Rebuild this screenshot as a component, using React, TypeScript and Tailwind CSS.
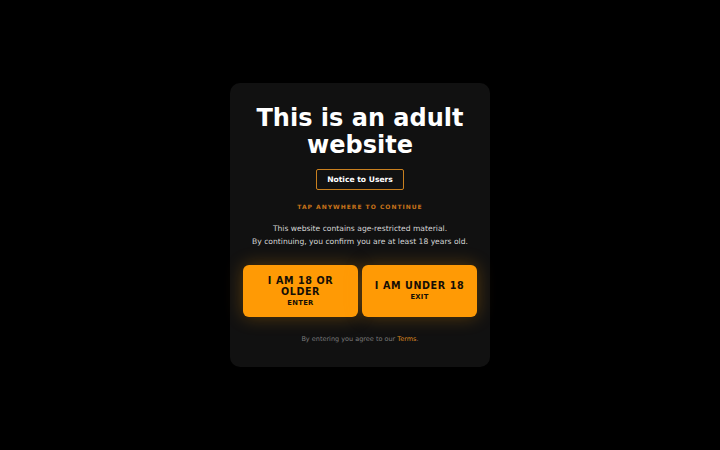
import React from "react";

export default function App() {
  return (
    <div
      className="w-[720px] h-[450px] bg-black flex items-center justify-center"
      style={{ fontFamily: '"DejaVu Sans", sans-serif' }}
    >
      <div className="w-[260px] h-[284px] bg-[#111111] rounded-[10px] flex flex-col items-center px-[13px] pt-[22px]">
        <h1 className="text-white font-bold text-[24px] leading-[27px] text-center">
          This is an adult
          <br />
          website
        </h1>
        <div className="mt-[10px] border-[1.5px] border-[#c9801f] rounded-[2px] px-[10px] h-[21px] flex items-center text-white font-bold text-[7.6px]">
          Notice to Users
        </div>
        <div className="mt-[12px] h-[9px] flex items-center text-[#c9741a] font-bold text-[6px] tracking-[1px]">
          TAP ANYWHERE TO CONTINUE
        </div>
        <p className="mt-[11px] text-[#d6d6d6] text-[7.6px] leading-[13px] text-center whitespace-nowrap">
          This website contains age-restricted material.
          <br />
          By continuing, you confirm you are at least 18 years old.
        </p>
        <div className="mt-[17px] w-full flex gap-[4px]">
          <div className="flex-1 h-[52px] bg-[#ff9a05] rounded-[6px] shadow-[0_0_18px_rgba(255,154,5,0.3)] flex flex-col items-center justify-center pt-[1px] text-[#140e05]">
            <div className="font-bold text-[9.6px] leading-[11px] tracking-[0.6px] text-center">
              I AM 18 OR
              <br />
              OLDER
            </div>
            <div className="font-bold text-[6.8px] mt-[1px] tracking-[0.3px]">ENTER</div>
          </div>
          <div className="flex-1 h-[52px] bg-[#ff9a05] rounded-[6px] shadow-[0_0_18px_rgba(255,154,5,0.3)] flex flex-col items-center justify-center pt-[1px] text-[#140e05]">
            <div className="font-bold text-[9.6px] leading-[11px] tracking-[0.6px]">I AM UNDER 18</div>
            <div className="font-bold text-[6.8px] mt-[1px] tracking-[0.3px]">EXIT</div>
          </div>
        </div>
        <div className="mt-[18px] h-[10px] flex items-center text-[#7a7a7a] text-[6.5px]">
          <span>
            By entering you agree to our <span className="text-[#d9861f]">Terms</span>.
          </span>
        </div>
      </div>
    </div>
  );
}
